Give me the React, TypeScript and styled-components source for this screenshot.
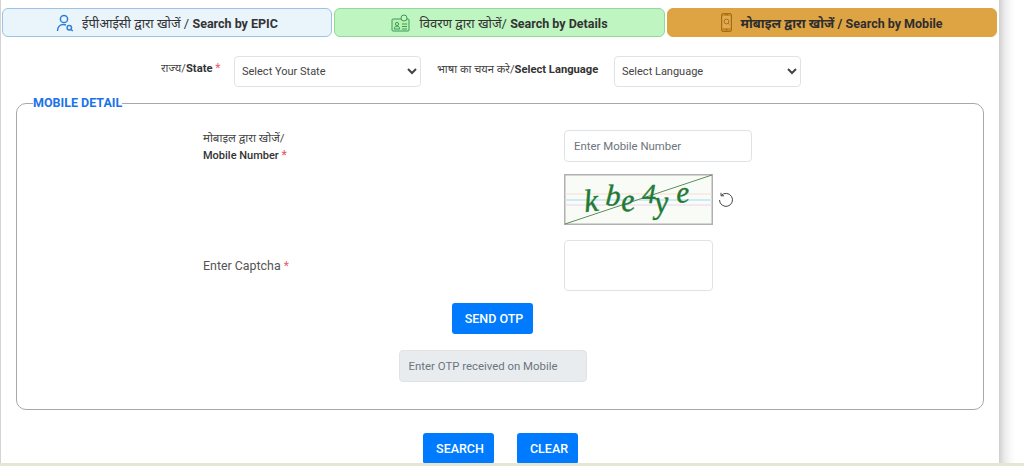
import React from "react";
import styled, { createGlobalStyle } from "styled-components";

const Global = createGlobalStyle`
  html, body { margin: 0; padding: 0; height: 466px; overflow: hidden; background: #fff; }
  body { font-family: Roboto, "Noto Sans", "Noto Sans Devanagari", sans-serif; }
  * { box-sizing: border-box; }
`;
const Viewport = styled.div`
  width: 1024px; height: 466px; overflow: hidden; display: flex; flex-direction: column; background: #fff;
`;
const Main = styled.div`display: flex; height: 463px;`;
const Page = styled.main`
  width: 999px; height: 463px; border-left: 1px solid #d4d4d4; padding: 8px 2px 0 1px; background: #fff;
`;
const Shadow = styled.div`
  width: 25px; background: linear-gradient(90deg, #cfcfcf 0, #e9e9e9 5px, #f8f8f8 11px, #fff 16px);
`;
const BottomStrip = styled.div`height: 3px; background: #e6e6d6;`;
const Tabs = styled.nav`display: grid; grid-template-columns: 330px 331px 330px; gap: 2px;`;
const Tab = styled.div<{ $bg: string; $bd: string; $fg: string; $bold?: boolean }>`
  height: 29px; border-radius: 6px; background: ${p => p.$bg}; border: 1px solid ${p => p.$bd}; color: ${p => p.$fg};
  display: flex; align-items: center; justify-content: center; gap: 8px; font-size: 13px;
  font-weight: ${p => (p.$bold ? 700 : 400)};
  b { font-weight: 700; font-size: 12.5px; }
`;
const FilterRow = styled.div`
  display: flex; align-items: flex-start; margin-top: 19px; margin-left: 157px; height: 32px;
`;
const FilterLabel = styled.label<{ $w: number; $pl?: number; $pt?: number }>`
  width: ${p => p.$w}px; font-size: 11.2px; color: #444; line-height: 14px; white-space: nowrap;
  padding: ${p => p.$pt ?? 5}px 0 0 ${p => p.$pl ?? 0}px;
  b { font-weight: 700; color: #333; }
`;
const Req = styled.span`color: #e4606d; font-size: 12px;`;
const Select = styled.select<{ $w: number }>`
  width: ${p => p.$w}px; height: 31px; border: 1px solid #e0e3e6; border-radius: 4px; background: #fff; color: #444;
  font: 400 11px Roboto, sans-serif; padding: 0 3px; outline: none;
`;
const Fieldset = styled.fieldset`
  margin: 8px 0 0 14px; width: 968px; height: 314px; border: 1px solid #a8a8a8; border-radius: 10px; padding: 0; position: relative;
`;
const Legend = styled.legend`
  margin-left: 16px; padding: 0; font-size: 12.5px; font-weight: 700; color: #1a73e8; line-height: 14px;
`;
const Form = styled.div`
  display: grid; grid-template-columns: 361px 188px; column-gap: 0; padding: 20px 0 0 186px; align-content: start;
`;
const FieldLabel = styled.label`
  font-size: 11.5px; color: #444; line-height: 16px; height: 32px;
  b { display: block; margin-top: 1px; font-size: 11px; font-weight: 500; color: #333; }
`;
const CaptchaLabel = styled.label`
  font-size: 12.4px; color: #555; align-self: center; padding-top: 14px;
`;
const TextInput = styled.input<{ $disabled?: boolean }>`
  width: 188px; height: 32px; border: 1px solid #e0e3e6; border-radius: 4px; padding: 0 9px; outline: none;
  font: 400 11.4px Roboto, sans-serif; background: ${p => (p.$disabled ? "#e9ecef" : "#fff")};
  &::placeholder { color: #6c757d; opacity: 1; }
`;
const CaptchaWrap = styled.div`
  grid-column: 2; display: flex; align-items: center; gap: 5px; margin-top: 12px; height: 51px; width: 187px;
`;
const CaptchaInput = styled.input`
  width: 149px; height: 51px; border: 1px solid #e0e3e6; border-radius: 4px; outline: none; margin-top: 15px; background: #fff;
`;
const Blank = styled.div``;
const Centered = styled.div`display: flex; justify-content: center; margin: 12px 0 0 -15px;`;
const BlueButton = styled.button<{ $w: number }>`
  width: ${p => p.$w}px; height: 31px; border: 0; border-radius: 3px; background: #007bff; color: #fff;
  font: 500 12.5px Roboto, sans-serif; padding: 0 0 0 3px;
`;
const OtpRow = styled.div`display: flex; justify-content: center; margin: 16px 0 0 -15px;`;
const Actions = styled.div`display: flex; gap: 23px; margin: 23px 0 0 421px;`;

const UserSearch = () => (
  <svg width="18" height="18" viewBox="0 0 18 18" fill="none" stroke="#2f7fd6" strokeWidth="1.5">
    <circle cx="8" cy="5" r="3.6" /><path d="M1.5 17c0-4 2.5-6.5 6-6.5 1 0 1.800.200 2.500.500" /><circle cx="13.300" cy="13.800" r="2.200" /><path d="M15 15.500l1.800 1.500" />
  </svg>
);
const CardIcon = () => (
  <svg width="20" height="18" viewBox="0 0 20 18" fill="none" stroke="#3a9a5c" strokeWidth="1">
    <rect x="1" y="5" width="17" height="12" rx="1" fill="#b8f0b0" /><circle cx="13" cy="4" r="3" fill="#c5f5bd" /><circle cx="6" cy="10" r="1.600" /><path d="M3.300 15c0-2 1.200-2.800 2.700-2.800s2.700.800 2.700 2.800zM11 10h5M11 12.500h5M11 15h5" />
  </svg>
);
const PhoneIcon = () => (
  <svg width="11" height="19" viewBox="0 0 11 19" fill="none" stroke="#a66e14">
    <rect x=".5" y=".5" width="10" height="18" rx="1.500" fill="#c98a28" /><rect x="1.500" y="3" width="8" height="12" fill="#e2aa52" stroke="none" /><circle cx="5.500" cy="8.500" r="2.400" /><path d="M7.200 10.300l1.300 1.300M4 1.700h3" /><circle cx="5.500" cy="16.800" r=".6" />
  </svg>
);
const Captcha = () => (
  <svg width="149" height="51" viewBox="0 0 149 51" role="img" aria-label="captcha">
    <rect x=".75" y=".75" width="147.500" height="49.500" fill="#f8fbf6" stroke="#b0b0b0" strokeWidth="1.500" />
    <path d="M1 20h147" stroke="#f8ddd6" /><path d="M1 26h147" stroke="#cdeaf5" strokeWidth="2" /><path d="M1 31h147" stroke="#ecd4ec" />
    <path d="M1 50L148 1" stroke="#5f8f5f" strokeWidth="1" />
    <g fill="#1f7a35" stroke="#1f7a35" strokeWidth=".4" fontFamily="'Liberation Serif', serif" fontStyle="italic">
      <text x="21" y="38" fontSize="32" transform="rotate(-6 21 38)">k</text>
      <text x="41" y="31" fontSize="30" transform="rotate(4 41 31)">b</text>
      <text x="58" y="38" fontSize="32" transform="rotate(-8 58 38)">e</text>
      <text x="78" y="29" fontSize="28">4</text>
      <text x="91" y="39" fontSize="32" transform="rotate(-4 91 39)">y</text>
      <text x="113" y="29" fontSize="30" transform="rotate(-6 113 29)">e</text>
    </g>
  </svg>
);
const RefreshIcon = () => (
  <svg width="16" height="16" viewBox="0 0 16 16" fill="none" stroke="#444" strokeWidth="1">
    <path d="M3.200 3.500A6.500 6.500 0 1 1 1.500 8" /><path d="M3 .8v3h3" />
  </svg>
);

export default function App() {
  return (
    <Viewport>
      <Global />
      <Main>
        <Page>
          <Tabs>
            <Tab $bg="#e9f5fb" $bd="#9cc3e6" $fg="#333"><UserSearch /><span>ईपीआईसी द्वारा खोजें / <b>Search by EPIC</b></span></Tab>
            <Tab $bg="#bff5c0" $bd="#93d79b" $fg="#333"><CardIcon /><span>विवरण द्वारा खोजें/ <b>Search by Details</b></span></Tab>
            <Tab $bg="#dea444" $bd="#dea444" $fg="#2e2e2e" $bold><PhoneIcon /><span>मोबाइल द्वारा खोजें / <b>Search by Mobile</b></span></Tab>
          </Tabs>
          <FilterRow>
            <FilterLabel $w={75} $pl={2}>राज्य/<b>State</b> <Req>*</Req></FilterLabel>
            <Select $w={187}><option>Select Your State</option></Select>
            <FilterLabel $w={193} $pl={16} $pt={7}>भाषा का चयन करे/<b>Select Language</b></FilterLabel>
            <Select $w={187}><option>Select Language</option></Select>
          </FilterRow>
          <Fieldset>
            <Legend>MOBILE DETAIL</Legend>
            <Form>
              <FieldLabel>मोबाइल द्वारा खोजें/<b>Mobile Number <Req>*</Req></b></FieldLabel>
              <TextInput placeholder="Enter Mobile Number" />
              <Blank />
              <CaptchaWrap><Captcha /><RefreshIcon /></CaptchaWrap>
              <CaptchaLabel>Enter Captcha <Req>*</Req></CaptchaLabel>
              <CaptchaInput />
            </Form>
            <Centered><BlueButton $w={81}>SEND OTP</BlueButton></Centered>
            <OtpRow><TextInput $disabled disabled placeholder="Enter OTP received on Mobile" /></OtpRow>
          </Fieldset>
          <Actions>
            <BlueButton $w={71}>SEARCH</BlueButton>
            <BlueButton $w={61}>CLEAR</BlueButton>
          </Actions>
        </Page>
        <Shadow />
      </Main>
      <BottomStrip />
    </Viewport>
  );
}
